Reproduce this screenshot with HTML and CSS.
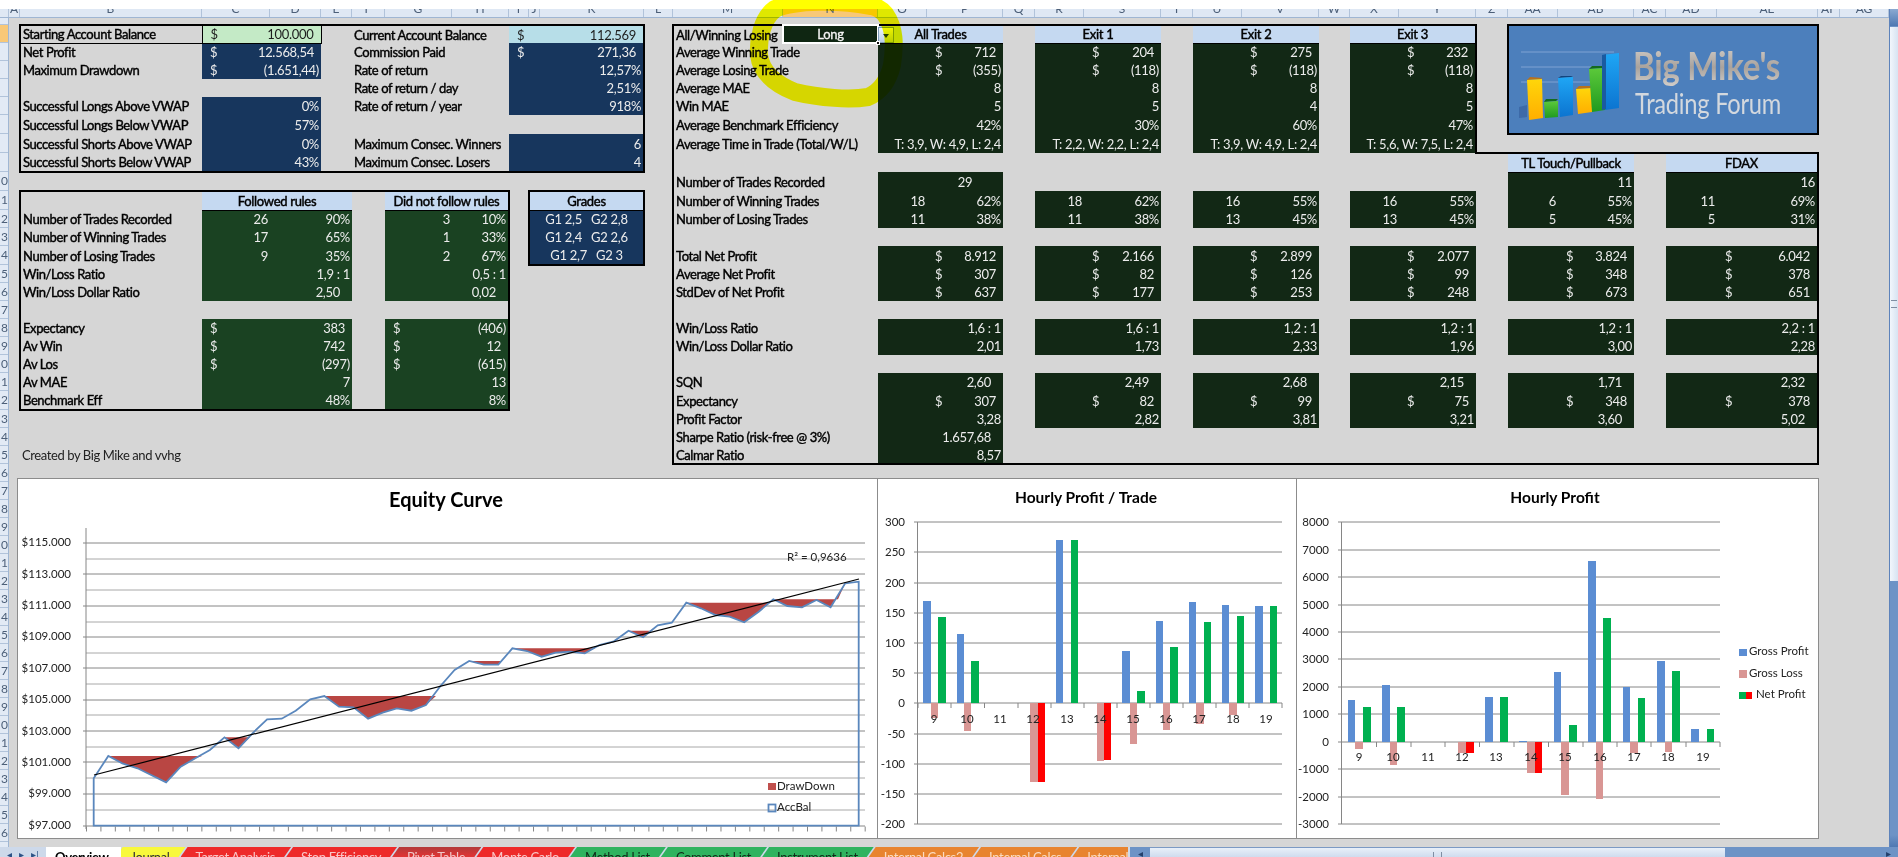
FILE: index.html
```html
<!DOCTYPE html>
<html lang="en">
<head>
  <meta charset="UTF-8">
  <title>Trade Journal - Overview</title>
  <link rel="stylesheet" href="styles.css">
</head>
<body>

<div class="app">
  <div class="topband"></div>

  <div class="main">
    <div class="sheet">
      <!-- column letters -->
      <div class="colhead">
        <span class="ch"></span><span class="ca">A</span><span class="cb">B</span><span class="cc">C</span><span class="cd">D</span><span class="ce">E</span><span class="cf">F</span><span class="cg">G</span><span class="chh">H</span><span class="ci">I</span><span class="cj">J</span><span class="ck">K</span><span class="cl">L</span><span class="cm">M</span><span class="cn on">N</span><span class="co">O</span><span class="cp">P</span><span class="cq">Q</span><span class="cr">R</span><span class="cs">S</span><span class="ct">T</span><span class="cu">U</span><span class="cv">V</span><span class="cw">W</span><span class="cx">X</span><span class="cy">Y</span><span class="cz">Z</span><span class="caa">AA</span><span class="cab">AB</span><span class="cac">AC</span><span class="cad">AD</span><span class="cae">AE</span><span class="caf">AF</span><span class="cag">AG</span>
      </div>

      <div class="sheetbody">
        <!-- row numbers, only the last digit shows in the narrow gutter -->
        <div class="rowhead">
          <span class="r8"></span><span class="on"></span><span></span><span></span><span></span><span></span><span class="r19"></span><span class="r19"></span><span class="r19"></span><span class="r19">0</span><span class="r19">1</span><span>2</span><span>3</span><span class="r19">4</span><span>5</span><span>6</span><span>7</span><span>8</span><span>9</span><span>0</span><span>1</span><span class="r19">2</span><span>3</span><span>4</span><span>5</span><span>6</span><span>7</span><span>8</span><span>9</span><span>0</span><span>1</span><span>2</span><span>3</span><span>4</span><span>5</span><span>6</span><span>7</span><span>8</span><span>9</span><span>0</span><span>1</span><span>2</span><span>3</span><span>4</span><span>5</span><span>6</span><span>7</span>
        </div>

        <div class="cells">
          <table class="grid">
            <colgroup>
              <col class="ca"><col class="cb"><col class="cc"><col class="cd"><col class="ce"><col class="cf"><col class="cg"><col class="chh"><col class="ci"><col class="cj"><col class="ck"><col class="cl"><col class="cm"><col class="cn"><col class="co"><col class="cp"><col class="cq"><col class="cr"><col class="cs"><col class="ct"><col class="cu"><col class="cv"><col class="cw"><col class="cx"><col class="cy"><col class="cz"><col class="caa"><col class="cab"><col class="cac"><col class="cad"><col class="cae"><col class="caf"><col class="cag">
            </colgroup>

            <tr class="r8"><td colspan="33"></td></tr>

            <!-- row 2 -->
            <tr>
              <td></td><td class="lb bl bt line">Starting Account Balance</td><td class="mint bt box" colspan="2"><span class="cur">$</span>100.000</td><td class="bt"></td><td class="lb bt" colspan="3">Current Account Balance</td><td class="sky bt br p7" colspan="3"><span class="cur">$</span>112.569</td><td></td>
              <td class="lb bl bt">All/Winning Losing</td><td class="sel c">Long<span class="drop"></span><span class="handle"></span></td><td class="hd bt c" colspan="2">All Trades</td><td class="bt"></td><td class="hd bt c" colspan="2">Exit 1</td><td class="bt"></td><td class="hd bt c" colspan="2">Exit 2</td><td class="bt"></td><td class="hd bt br c" colspan="2">Exit 3</td><td></td>
              <td class="logo" colspan="5" rowspan="6">
                <svg class="logosvg" viewBox="1510 27 306 106" width="306" height="106">
                  <defs>
                    <linearGradient id="metal" x1="0" y1="0" x2="0" y2="1"><stop offset="0" stop-color="#d8d4d0"/><stop offset=".55" stop-color="#a9a29c"/><stop offset="1" stop-color="#d6d2ce"/></linearGradient>
                    <linearGradient id="yel" x1="0" y1="0" x2="0" y2="1"><stop offset="0" stop-color="#ffd60a"/><stop offset="1" stop-color="#ffae00"/></linearGradient>
                    <linearGradient id="grn" x1="0" y1="0" x2="0" y2="1"><stop offset="0" stop-color="#5cc93a"/><stop offset="1" stop-color="#1f9a1f"/></linearGradient>
                    <linearGradient id="blu" x1="0" y1="0" x2="0" y2="1"><stop offset="0" stop-color="#1fa6f5"/><stop offset="1" stop-color="#0c74d0"/></linearGradient>
                  </defs>
                  <path d="M1522 52H1615M1522 67H1615M1522 82H1615" stroke="#7ea3d3" stroke-width="1" fill="none"/>
                  <polygon points="1520,107 1528,105 1528,117 1520,118" fill="#3d6aa8"/>
                  <polygon points="1528,80 1541,79 1544,78 1531,77" fill="#b9711a"/>
                  <polygon points="1528,80 1543,79 1544,118 1530,120" fill="url(#yel)"/>
                  <polygon points="1545,102 1557,101 1559,99 1547,99" fill="#136b1e"/>
                  <polygon points="1545,102 1559,101 1559,117 1546,118" fill="url(#grn)"/>
                  <polygon points="1559,78 1572,77 1574,76 1562,76" fill="#12457e"/>
                  <polygon points="1559,78 1574,77 1574,115 1561,117" fill="url(#blu)"/>
                  <polygon points="1577,89 1591,88 1593,86 1580,86" fill="#b9711a"/>
                  <polygon points="1577,89 1593,88 1593,112 1579,114" fill="url(#yel)"/>
                  <polygon points="1590,69 1604,68 1606,66 1593,66" fill="#136b1e"/>
                  <polygon points="1590,69 1606,68 1606,110 1593,112" fill="url(#grn)"/>
                  <polygon points="1603,55 1620,53 1620,108 1606,110" fill="url(#blu)"/>
                  <polygon points="1603,55 1607,54 1607,109 1603,110" fill="#1a5aa0"/>
                  <text class="logo1" x="1634" y="80" textLength="147" lengthAdjust="spacingAndGlyphs" fill="url(#metal)">Big Mike's</text>
                  <text class="logo2" x="1636" y="114" textLength="146" lengthAdjust="spacingAndGlyphs">Trading Forum</text>
                </svg>
              </td>
              <td colspan="2"></td>
            </tr>

            <!-- row 3 -->
            <tr>
              <td></td><td class="lb bl">Net Profit</td><td class="nv p7" colspan="2"><span class="cur">$</span>12.568,54</td><td></td><td class="lb" colspan="3">Commission Paid</td><td class="nv br p7" colspan="3"><span class="cur">$</span>271,36</td><td></td>
              <td class="lb bl" colspan="2">Average Winning Trade</td><td class="dk"></td><td class="dk p7"><span class="cur">$</span>712</td><td></td><td class="dk"></td><td class="dk p7"><span class="cur">$</span>204</td><td></td><td class="dk"></td><td class="dk p7"><span class="cur">$</span>275</td><td></td><td class="dk"></td><td class="dk br p7"><span class="cur">$</span>232</td><td></td><td colspan="2"></td>
            </tr>

            <!-- row 4 -->
            <tr>
              <td></td><td class="lb bl">Maximum Drawdown</td><td class="nv" colspan="2"><span class="cur">$</span>(1.651,44)</td><td></td><td class="lb" colspan="3">Rate of return</td><td class="nv br" colspan="3">12,57%</td><td></td>
              <td class="lb bl" colspan="2">Average Losing Trade</td><td class="dk"></td><td class="dk"><span class="cur">$</span>(355)</td><td></td><td class="dk"></td><td class="dk"><span class="cur">$</span>(118)</td><td></td><td class="dk"></td><td class="dk"><span class="cur">$</span>(118)</td><td></td><td class="dk"></td><td class="dk br"><span class="cur">$</span>(118)</td><td></td><td colspan="2"></td>
            </tr>

            <!-- row 5 -->
            <tr>
              <td></td><td class="lb bl"></td><td colspan="2"></td><td></td><td class="lb" colspan="3">Rate of return / day</td><td class="nv br" colspan="3">2,51%</td><td></td>
              <td class="lb bl" colspan="2">Average MAE</td><td class="dk"></td><td class="dk">8</td><td></td><td class="dk"></td><td class="dk">8</td><td></td><td class="dk"></td><td class="dk">8</td><td></td><td class="dk"></td><td class="dk br">8</td><td></td><td colspan="2"></td>
            </tr>

            <!-- row 6 -->
            <tr>
              <td></td><td class="lb bl">Successful Longs Above VWAP</td><td class="nv" colspan="2">0%</td><td></td><td class="lb" colspan="3">Rate of return / year</td><td class="nv br" colspan="3">918%</td><td></td>
              <td class="lb bl" colspan="2">Win MAE</td><td class="dk"></td><td class="dk">5</td><td></td><td class="dk"></td><td class="dk">5</td><td></td><td class="dk"></td><td class="dk">4</td><td></td><td class="dk"></td><td class="dk br">5</td><td></td><td colspan="2"></td>
            </tr>

            <!-- row 7 -->
            <tr class="r19">
              <td></td><td class="lb bl">Successful Longs Below VWAP</td><td class="nv" colspan="2">57%</td><td></td><td class="lb" colspan="3"></td><td class="br" colspan="3"></td><td></td>
              <td class="lb bl" colspan="2">Average Benchmark Efficiency</td><td class="dk"></td><td class="dk">42%</td><td></td><td class="dk"></td><td class="dk">30%</td><td></td><td class="dk"></td><td class="dk">60%</td><td></td><td class="dk"></td><td class="dk br">47%</td><td></td><td colspan="2"></td>
            </tr>

            <!-- row 8 -->
            <tr class="r19">
              <td></td><td class="lb bl">Successful Shorts Above VWAP</td><td class="nv" colspan="2">0%</td><td></td><td class="lb" colspan="3">Maximum Consec. Winners</td><td class="nv br" colspan="3">6</td><td></td>
              <td class="lb bl" colspan="2">Average Time in Trade (Total/W/L)</td><td class="dk" colspan="2">T: 3,9, W: 4,9, L: 2,4</td><td></td><td class="dk" colspan="2">T: 2,2, W: 2,2, L: 2,4</td><td></td><td class="dk" colspan="2">T: 3,9, W: 4,9, L: 2,4</td><td></td><td class="dk br" colspan="2">T: 5,6, W: 7,5, L: 2,4</td><td colspan="6"></td><td colspan="2"></td>
            </tr>

            <!-- row 9 -->
            <tr class="r19">
              <td></td><td class="lb bl bb">Successful Shorts Below VWAP</td><td class="nv bb" colspan="2">43%</td><td class="bb"></td><td class="lb bb" colspan="3">Maximum Consec. Losers</td><td class="nv br bb" colspan="3">4</td><td></td>
              <td class="bl" colspan="2"></td><td colspan="11"></td><td class="bt"></td><td class="hd bt c" colspan="2">TL Touch/Pullback</td><td class="bt"></td><td class="hd bt br c" colspan="2">FDAX</td><td colspan="2"></td>
            </tr>

            <!-- row 10 -->
            <tr class="r19">
              <td colspan="12"></td>
              <td class="lb bl" colspan="2">Number of Trades Recorded</td><td class="dk"></td><td class="dk c">29</td><td colspan="10"></td><td class="dk"></td><td class="dk">11</td><td></td><td class="dk"></td><td class="dk br">16</td><td colspan="2"></td>
            </tr>

            <!-- row 11 -->
            <tr class="r19">
              <td></td><td class="bl bt"></td><td class="hd bt c" colspan="3">Followed rules</td><td class="bt"></td><td class="hd bt br c" colspan="2">Did not follow rules</td><td></td><td class="hd bt bl br c" colspan="2">Grades</td><td></td>
              <td class="lb bl" colspan="2">Number of Winning Trades</td><td class="dk">18</td><td class="dk">62%</td><td></td><td class="dk">18</td><td class="dk">62%</td><td></td><td class="dk">16</td><td class="dk">55%</td><td></td><td class="dk">16</td><td class="dk">55%</td><td></td><td class="dk">6</td><td class="dk">55%</td><td></td><td class="dk">11</td><td class="dk br">69%</td><td colspan="2"></td>
            </tr>

            <!-- row 12 -->
            <tr>
              <td></td><td class="lb bl">Number of Trades Recorded</td><td class="gr">26</td><td class="gr" colspan="2">90%</td><td></td><td class="gr">3</td><td class="gr br">10%</td><td></td><td class="nv c bl br keep" colspan="2">G1 2,5   G2 2,8</td><td></td>
              <td class="lb bl" colspan="2">Number of Losing Trades</td><td class="dk">11</td><td class="dk">38%</td><td></td><td class="dk">11</td><td class="dk">38%</td><td></td><td class="dk">13</td><td class="dk">45%</td><td></td><td class="dk">13</td><td class="dk">45%</td><td></td><td class="dk">5</td><td class="dk">45%</td><td></td><td class="dk">5</td><td class="dk br">31%</td><td colspan="2"></td>
            </tr>

            <!-- row 13 -->
            <tr>
              <td></td><td class="lb bl">Number of Winning Trades</td><td class="gr">17</td><td class="gr" colspan="2">65%</td><td></td><td class="gr">1</td><td class="gr br">33%</td><td></td><td class="nv c bl br keep" colspan="2">G1 2,4   G2 2,6</td><td></td>
              <td class="bl" colspan="2"></td><td colspan="16"></td><td class="br"></td><td colspan="2"></td>
            </tr>

            <!-- row 14 -->
            <tr class="r19">
              <td></td><td class="lb bl">Number of Losing Trades</td><td class="gr">9</td><td class="gr" colspan="2">35%</td><td></td><td class="gr">2</td><td class="gr br">67%</td><td></td><td class="nv c bl br bb keep" colspan="2">G1 2,7   G2 3</td><td></td>
              <td class="lb bl" colspan="2">Total Net Profit</td><td class="dk"></td><td class="dk p7"><span class="cur">$</span>8.912</td><td></td><td class="dk"></td><td class="dk p7"><span class="cur">$</span>2.166</td><td></td><td class="dk"></td><td class="dk p7"><span class="cur">$</span>2.899</td><td></td><td class="dk"></td><td class="dk p7"><span class="cur">$</span>2.077</td><td></td><td class="dk"></td><td class="dk p7"><span class="cur">$</span>3.824</td><td></td><td class="dk"></td><td class="dk br p7"><span class="cur">$</span>6.042</td><td colspan="2"></td>
            </tr>

            <!-- row 15 -->
            <tr>
              <td></td><td class="lb bl">Win/Loss Ratio</td><td class="gr" colspan="3">1,9 : 1</td><td></td><td class="gr br" colspan="2">0,5 : 1</td><td colspan="4"></td>
              <td class="lb bl" colspan="2">Average Net Profit</td><td class="dk"></td><td class="dk p7"><span class="cur">$</span>307</td><td></td><td class="dk"></td><td class="dk p7"><span class="cur">$</span>82</td><td></td><td class="dk"></td><td class="dk p7"><span class="cur">$</span>126</td><td></td><td class="dk"></td><td class="dk p7"><span class="cur">$</span>99</td><td></td><td class="dk"></td><td class="dk p7"><span class="cur">$</span>348</td><td></td><td class="dk"></td><td class="dk br p7"><span class="cur">$</span>378</td><td colspan="2"></td>
            </tr>

            <!-- row 16 -->
            <tr>
              <td></td><td class="lb bl">Win/Loss Dollar Ratio</td><td class="gr p12" colspan="3">2,50</td><td></td><td class="gr br p12" colspan="2">0,02</td><td colspan="4"></td>
              <td class="lb bl" colspan="2">StdDev of Net Profit</td><td class="dk"></td><td class="dk p7"><span class="cur">$</span>637</td><td></td><td class="dk"></td><td class="dk p7"><span class="cur">$</span>177</td><td></td><td class="dk"></td><td class="dk p7"><span class="cur">$</span>253</td><td></td><td class="dk"></td><td class="dk p7"><span class="cur">$</span>248</td><td></td><td class="dk"></td><td class="dk p7"><span class="cur">$</span>673</td><td></td><td class="dk"></td><td class="dk br p7"><span class="cur">$</span>651</td><td colspan="2"></td>
            </tr>

            <!-- row 17 -->
            <tr>
              <td></td><td class="bl"></td><td colspan="4"></td><td class="br" colspan="2"></td><td colspan="4"></td>
              <td class="bl" colspan="2"></td><td colspan="16"></td><td class="br"></td><td colspan="2"></td>
            </tr>

            <!-- row 18 -->
            <tr>
              <td></td><td class="lb bl">Expectancy</td><td class="gr p7" colspan="3"><span class="cur">$</span>383</td><td></td><td class="gr br" colspan="2"><span class="cur">$</span>(406)</td><td colspan="4"></td>
              <td class="lb bl" colspan="2">Win/Loss Ratio</td><td class="dk" colspan="2">1,6 : 1</td><td></td><td class="dk" colspan="2">1,6 : 1</td><td></td><td class="dk" colspan="2">1,2 : 1</td><td></td><td class="dk" colspan="2">1,2 : 1</td><td></td><td class="dk" colspan="2">1,2 : 1</td><td></td><td class="dk br" colspan="2">2,2 : 1</td><td colspan="2"></td>
            </tr>

            <!-- row 19 -->
            <tr>
              <td></td><td class="lb bl">Av Win</td><td class="gr p7" colspan="3"><span class="cur">$</span>742</td><td></td><td class="gr br p7" colspan="2"><span class="cur">$</span>12</td><td colspan="4"></td>
              <td class="lb bl" colspan="2">Win/Loss Dollar Ratio</td><td class="dk" colspan="2">2,01</td><td></td><td class="dk" colspan="2">1,73</td><td></td><td class="dk" colspan="2">2,33</td><td></td><td class="dk" colspan="2">1,96</td><td></td><td class="dk" colspan="2">3,00</td><td></td><td class="dk br" colspan="2">2,28</td><td colspan="2"></td>
            </tr>

            <!-- row 20 -->
            <tr>
              <td></td><td class="lb bl">Av Los</td><td class="gr" colspan="3"><span class="cur">$</span>(297)</td><td></td><td class="gr br" colspan="2"><span class="cur">$</span>(615)</td><td colspan="4"></td>
              <td class="bl" colspan="2"></td><td colspan="16"></td><td class="br"></td><td colspan="2"></td>
            </tr>

            <!-- row 21 -->
            <tr>
              <td></td><td class="lb bl">Av MAE</td><td class="gr" colspan="3">7</td><td></td><td class="gr br" colspan="2">13</td><td colspan="4"></td>
              <td class="lb bl" colspan="2">SQN</td><td class="dk p12" colspan="2">2,60</td><td></td><td class="dk p12" colspan="2">2,49</td><td></td><td class="dk p12" colspan="2">2,68</td><td></td><td class="dk p12" colspan="2">2,15</td><td></td><td class="dk p12" colspan="2">1,71</td><td></td><td class="dk br p12" colspan="2">2,32</td><td colspan="2"></td>
            </tr>

            <!-- row 22 -->
            <tr class="r19">
              <td></td><td class="lb bl bb">Benchmark Eff</td><td class="gr bb" colspan="3">48%</td><td class="bb"></td><td class="gr br bb" colspan="2">8%</td><td colspan="4"></td>
              <td class="lb bl" colspan="2">Expectancy</td><td class="dk"></td><td class="dk p7"><span class="cur">$</span>307</td><td></td><td class="dk"></td><td class="dk p7"><span class="cur">$</span>82</td><td></td><td class="dk"></td><td class="dk p7"><span class="cur">$</span>99</td><td></td><td class="dk"></td><td class="dk p7"><span class="cur">$</span>75</td><td></td><td class="dk"></td><td class="dk p7"><span class="cur">$</span>348</td><td></td><td class="dk"></td><td class="dk br p7"><span class="cur">$</span>378</td><td colspan="2"></td>
            </tr>

            <!-- row 23 -->
            <tr>
              <td colspan="12"></td>
              <td class="lb bl" colspan="2">Profit Factor</td><td class="dk" colspan="2">3,28</td><td></td><td class="dk" colspan="2">2,82</td><td></td><td class="dk" colspan="2">3,81</td><td></td><td class="dk" colspan="2">3,21</td><td></td><td class="dk p12" colspan="2">3,60</td><td></td><td class="dk br p12" colspan="2">5,02</td><td colspan="2"></td>
            </tr>

            <!-- row 24 -->
            <tr>
              <td colspan="12"></td>
              <td class="lb bl" colspan="2">Sharpe Ratio (risk-free @ 3%)</td><td class="dk p12" colspan="2">1.657,68</td><td colspan="14"></td><td class="br"></td><td colspan="2"></td>
            </tr>

            <!-- row 25 -->
            <tr>
              <td></td><td class="lb thin" colspan="3">Created by Big Mike and vvhg</td><td colspan="8"></td>
              <td class="lb bl bb" colspan="2">Calmar Ratio</td><td class="dk bb" colspan="2">8,57</td><td class="bb" colspan="14"></td><td class="br bb"></td><td colspan="2"></td>
            </tr>
          </table>

          <!-- embedded charts, coordinates in the viewBox are sheet pixels -->
          <div class="charts">
            <div class="chart c1">
              <svg viewBox="18 479 859 359" width="859" height="359">
                <text class="title big" x="446" y="507" text-anchor="middle">Equity Curve</text>
                <path class="minor" d="M86 559H865M86 590H865M86 622H865M86 653H865M86 684H865M86 715H865M86 747H865M86 778H865M86 810H865"/>
                <path class="major" d="M83 543H865M83 574H865M83 606H865M83 637H865M83 668H865M83 700H865M83 731H865M83 762H865M83 794H865M83 826H865M86 528V829"/>
                <line class="ticks" x1="86" y1="829" x2="866" y2="829"/>
                <g class="ax" text-anchor="end">
                  <text x="71" y="546">$115.000</text><text x="71" y="578">$113.000</text><text x="71" y="609">$111.000</text><text x="71" y="640">$109.000</text><text x="71" y="672">$107.000</text><text x="71" y="703">$105.000</text><text x="71" y="735">$103.000</text><text x="71" y="766">$101.000</text><text x="71" y="797">$99.000</text><text x="71" y="829">$97.000</text>
                </g>
                <g class="dd">
                  <polygon points="108.3,756 122.3,763.3 137.5,768.3 166.1,782.3 180.7,766.7 195.3,758.3 202,756"/>
                  <polygon points="224.5,737.3 238.5,748.3 250,737.3"/>
                  <polygon points="324.4,696 339,706.7 353.5,707.3 368.1,718.7 382.7,712.7 396.8,708.3 411.4,710.7 426,705 436,696"/>
                  <polygon points="469.2,661 483.8,664.7 498.3,664.7 501,661"/>
                  <polygon points="512.4,648.3 527,651 541.6,656.7 555.6,652.7 570.2,651.7 584.8,653.3 595,648.3"/>
                  <polygon points="628.5,630.7 643.1,637.3 657,626 650,630.7"/>
                  <polygon points="686.3,602.7 700.9,608.3 715.5,615 729.6,616.7 744.2,622.3 758.7,611.7 769,602.7"/>
                  <polygon points="773.3,599.3 787.4,606 802,607.3 816.5,600 830.6,607.3 845.2,583.3 838,599.3"/>
                </g>
                <polygon class="acc" points="93.7,825.7 93.7,778.3 108.3,756 122.3,763.3 137.5,768.3 166.1,782.3 180.7,766.7 195.3,758.3 209.9,750 224.5,737.3 238.5,748.3 252.5,733.3 267.1,719.3 281.7,718.7 295.7,710.7 310.3,699.3 324.4,696 339,706.7 353.5,707.3 368.1,718.7 382.7,712.7 396.8,708.3 411.4,710.7 426,705 440.5,686 454.6,670 469.2,661 483.8,664.7 498.3,664.7 512.4,648.3 527,651 541.6,656.7 555.6,652.7 570.2,651.7 584.8,653.3 599.4,645 613.9,641.3 628.5,630.7 643.1,637.3 657.7,625.3 671.8,622.7 686.3,602.7 700.9,608.3 715.5,615 729.6,616.7 744.2,622.3 758.7,611.7 773.3,599.3 787.4,606 802,607.3 816.5,600 830.6,607.3 845.2,583.3 858.7,581.7 858.7,825.7"/>
                <line class="trend" x1="94" y1="775" x2="859" y2="579"/>
                <text class="ax" x="787" y="561">R² = 0,9636</text>
                <rect x="768" y="783" width="8" height="7" fill="#c0504d"/>
                <text class="ax" x="777" y="790">DrawDown</text>
                <rect class="acc" x="768.5" y="804.5" width="7" height="7"/>
                <text class="ax" x="777" y="811">AccBal</text>
              </svg>
            </div>

            <div class="chart c2">
              <svg viewBox="879 479 418 359" width="418" height="359">
                <text class="title" x="1087" y="503" text-anchor="middle">Hourly Profit / Trade</text>
                <path class="major" d="M915 522H1283M915 552H1283M915 583H1283M915 613H1283M915 643H1283M915 673H1283M915 703H1283M915 734H1283M915 764H1283M915 794H1283M915 824H1283M918.5 522V824"/>
                <path class="major" d="M919 703V708M952 703V708M985.500 703V708M1019 703V708M1052 703V708M1085 703V708M1118 703V708M1151 703V708M1184 703V708M1217 703V708M1250 703V708M1283 703V708"/>
                <g class="ax" text-anchor="end">
                  <text x="906" y="526">300</text><text x="906" y="556">250</text><text x="906" y="587">200</text><text x="906" y="617">150</text><text x="906" y="647">100</text><text x="906" y="677">50</text><text x="906" y="707">0</text><text x="906" y="738">-50</text><text x="906" y="768">-100</text><text x="906" y="798">-150</text><text x="906" y="828">-200</text>
                </g>
                <g class="blue">
                  <rect x="924" y="601" width="8" height="102"/><rect x="958" y="634" width="7" height="69"/><rect x="1057" y="540" width="7" height="163"/><rect x="1123" y="651" width="8" height="52"/><rect x="1157" y="621" width="7" height="82"/><rect x="1190" y="602" width="7" height="101"/><rect x="1223" y="605" width="7" height="98"/><rect x="1256" y="606" width="8" height="97"/>
                </g>
                <g class="pink">
                  <rect x="932" y="703" width="7" height="15"/><rect x="965" y="703" width="7" height="28"/><rect x="1031" y="703" width="8" height="79"/><rect x="1098" y="703" width="7" height="58"/><rect x="1131" y="703" width="7" height="41"/><rect x="1164" y="703" width="7" height="27"/><rect x="1197" y="703" width="8" height="21"/><rect x="1230" y="703" width="8" height="12"/>
                </g>
                <g class="green">
                  <rect x="939" y="617" width="8" height="86"/><rect x="972" y="661" width="8" height="42"/><rect x="1072" y="540" width="7" height="163"/><rect x="1138" y="691" width="8" height="12"/><rect x="1171" y="647" width="8" height="56"/><rect x="1205" y="622" width="7" height="81"/><rect x="1238" y="616" width="7" height="87"/><rect x="1271" y="606" width="7" height="97"/>
                </g>
                <g class="red">
                  <rect x="1039" y="703" width="7" height="79"/><rect x="1105" y="703" width="7" height="57"/>
                </g>
                <g class="ax" text-anchor="middle">
                  <text x="935" y="723">9</text><text x="968" y="723">10</text><text x="1001" y="723">11</text><text x="1034" y="723">12</text><text x="1068" y="723">13</text><text x="1101" y="723">14</text><text x="1134" y="723">15</text><text x="1167" y="723">16</text><text x="1200" y="723">17</text><text x="1234" y="723">18</text><text x="1267" y="723">19</text>
                </g>
              </svg>
            </div>

            <div class="chart c3">
              <svg viewBox="1299 479 520 359" width="520" height="359">
                <text class="title" x="1557" y="503" text-anchor="middle">Hourly Profit</text>
                <path class="major" d="M1340 522H1722M1340 550H1722M1340 577H1722M1340 605H1722M1340 632H1722M1340 659H1722M1340 687H1722M1340 714H1722M1340 742H1722M1340 769H1722M1340 797H1722M1340 824H1722M1343.500 522V824"/>
                <path class="major" d="M1378.500 742V747M1413 742V747M1447 742V747M1481.500 742V747M1516 742V747M1550.500 742V747M1585 742V747M1619 742V747M1653 742V747M1688 742V747M1722 742V747"/>
                <g class="ax" text-anchor="end">
                  <text x="1331" y="526">8000</text><text x="1331" y="554">7000</text><text x="1331" y="581">6000</text><text x="1331" y="609">5000</text><text x="1331" y="636">4000</text><text x="1331" y="663">3000</text><text x="1331" y="691">2000</text><text x="1331" y="718">1000</text><text x="1331" y="746">0</text><text x="1331" y="773">-1000</text><text x="1331" y="801">-2000</text><text x="1331" y="828">-3000</text>
                </g>
                <g class="blue">
                  <rect x="1350" y="700" width="7" height="42"/><rect x="1384" y="685" width="8" height="57"/><rect x="1487" y="697" width="8" height="45"/><rect x="1521" y="741" width="8" height="1"/><rect x="1556" y="672" width="7" height="70"/><rect x="1590" y="561" width="8" height="181"/><rect x="1625" y="687" width="7" height="55"/><rect x="1659" y="661" width="8" height="81"/><rect x="1693" y="729" width="8" height="13"/>
                </g>
                <g class="pink">
                  <rect x="1357" y="742" width="8" height="7"/><rect x="1392" y="742" width="7" height="23"/><rect x="1460" y="742" width="8" height="11"/><rect x="1529" y="742" width="8" height="31"/><rect x="1563" y="742" width="8" height="53"/><rect x="1598" y="742" width="7" height="57"/><rect x="1632" y="742" width="8" height="11"/><rect x="1667" y="742" width="7" height="10"/>
                </g>
                <g class="green">
                  <rect x="1365" y="707" width="8" height="35"/><rect x="1399" y="707" width="8" height="35"/><rect x="1502" y="697" width="8" height="45"/><rect x="1571" y="725" width="8" height="17"/><rect x="1605" y="618" width="8" height="124"/><rect x="1640" y="698" width="7" height="44"/><rect x="1674" y="671" width="8" height="71"/><rect x="1709" y="729" width="7" height="13"/>
                </g>
                <g class="red">
                  <rect x="1468" y="742" width="8" height="11"/><rect x="1537" y="742" width="7" height="31"/>
                </g>
                <g class="ax" text-anchor="middle">
                  <text x="1361" y="761">9</text><text x="1395" y="761">10</text><text x="1430" y="761">11</text><text x="1464" y="761">12</text><text x="1498" y="761">13</text><text x="1533" y="761">14</text><text x="1567" y="761">15</text><text x="1602" y="761">16</text><text x="1636" y="761">17</text><text x="1670" y="761">18</text><text x="1705" y="761">19</text>
                </g>
                <rect class="blue" x="1741" y="649" width="8" height="7"/>
                <text class="ax" x="1751" y="655">Gross Profit</text>
                <rect class="pink" x="1741" y="670" width="8" height="8"/>
                <text class="ax" x="1751" y="677">Gross Loss</text>
                <rect class="green" x="1741" y="692" width="7" height="7"/><rect class="red" x="1748" y="692" width="6" height="7"/>
                <text class="ax" x="1758" y="698">Net Profit</text>
              </svg>
            </div>
          </div>
        </div>
      </div>
    </div>

    <!-- vertical scrollbar -->
    <div class="vscroll">
      <div class="vup"></div>
      <div class="vthumb"><span class="grip"></span></div>
      <div class="vtrack"></div>
      <div class="vdown"></div>
    </div>
  </div>

  <!-- sheet tabs and horizontal scrollbar -->
  <div class="tabbar">
    <div class="tabnav"><span>◂</span><span>▸</span><span>▸|</span></div>
    <div class="tabs">
      <span class="tab t-active">Overview</span>
      <span class="tab t-yellow">Journal</span>
      <span class="tab t-red">Target Analysis</span>
      <span class="tab t-red">Stop Efficiency</span>
      <span class="tab t-dred">Pivot Table</span>
      <span class="tab t-red">Monte Carlo</span>
      <span class="tab t-green">Method List</span>
      <span class="tab t-green">Comment List</span>
      <span class="tab t-green">Instrument List</span>
      <span class="tab t-orange">Internal Calcs2</span>
      <span class="tab t-orange">Internal Calcs</span>
      <span class="tab t-orange">Internal Calcs3</span>
    </div>
    <div class="hscroll">
      <div class="harrow">◂</div>
      <div class="hthumb"><span class="hgrip"></span></div>
      <div class="htrack"></div>
      <div class="harrow">▸</div>
    </div>
  </div>

  <!-- yellow marker scribble someone drew over the screenshot -->
  <svg class="scribble" viewBox="740 0 170 115" width="170" height="115">
    <path d="M870 6C840 0 795 0 775 9C762 18 758 40 759 55C761 72 775 84 795 92C820 98 850 100 868 97C880 92 888 82 892 65C895 45 895 28 885 14C880 8 875 6 868 5"/>
  </svg>
</div>

</body>
</html>
```

FILE: styles.css
```css
body{
  margin: 0;
  font-family: Lato, "Open Sans", sans-serif;
}

.app{
  position: relative;
  width: 1898px;
  height: 857px;
  overflow: hidden;
  display: flex;
  flex-direction: column;
  background: #d6d6d6;
}

.topband{
  height: 9px;
  background: #fff;
  flex: none;
}

.main{
  display: flex;
  height: 838px;
  flex: none;
}

.sheet{
  width: 1889px;
  flex: none;
}

/* column widths, shared by the letter strip and the table */
.ch{width: 9px}
.ca{width: 11px}
.cb{width: 182px}
.cc{width: 68px}
.cd{width: 51px}
.ce{width: 31px}
.cf{width: 33px}
.cg{width: 67px}
.chh{width: 57px}
.ci{width: 20px}
.cj{width: 11px}
.ck{width: 104px}
.cl{width: 29px}
.cm{width: 110px}
.cn{width: 95px}
.co{width: 49px}
.cp{width: 76px}
.cq{width: 32px}
.cr{width: 49px}
.cs{width: 77px}
.ct{width: 32px}
.cu{width: 49px}
.cv{width: 77px}
.cw{width: 31px}
.cx{width: 49px}
.cy{width: 77px}
.cz{width: 32px}
.caa{width: 50px}
.cab{width: 76px}
.cac{width: 32px}
.cad{width: 51px}
.cae{width: 101px}
.caf{width: 22px}
.cag{width: 49px}

.colhead{
  display: flex;
  height: 9px;
  overflow: hidden;
  background: #dfe8f4;
  border-bottom: 1px solid #9fb6d3;
  box-sizing: border-box;
}
.colhead span{
  flex: none;
  box-sizing: border-box;
  margin-top: -9px;
  height: 18px;
  line-height: 18px;
  font-size: 12px;
  color: #4c5f78;
  text-align: center;
  border-right: 1px solid #b1c3da;
}
.colhead .on{
  background: #f8c877;
}

.sheetbody{
  display: flex;
}

.rowhead{
  width: 9px;
  flex: none;
  display: flex;
  flex-direction: column;
  background: #e2eaf5;
  border-right: 1px solid #9fb6d3;
  box-sizing: border-box;
  height: 829px;
  overflow: hidden;
}
.rowhead span{
  flex: none;
  height: 18px;
  line-height: 17px;
  font-size: 12px;
  color: #4c5f78;
  text-align: left;
  padding-left: 1px;
  box-sizing: border-box;
  border-bottom: 1px solid #b1c3da;
}
.rowhead .r8{height: 7px}
.rowhead .r19{height: 19px}
.rowhead .on{background: #f8c877}

.cells{
  width: 1880px;
}

/* the sheet itself */
.grid{
  width: 1880px;
  table-layout: fixed;
  border-collapse: collapse;
  font-size: 13px;
  letter-spacing: -.3px;
  color: #ececec;
}
.grid tr{height: 18px}
.grid tr.r8{height: 7px}
.grid tr.r19{height: 19px}
.grid td{
  padding: 0 2px 0 0;
  line-height: 16px;
  text-align: right;
  white-space: nowrap;
  overflow: hidden;
}

.grid .lb{
  color: #000;
  text-align: left;
  padding: 0 0 0 2px;
  overflow: visible;
  letter-spacing: -.4px;
  -webkit-text-stroke: .4px #000;
}
.grid .thin{
  -webkit-text-stroke: 0;
  color: #222;
}
.grid .c{
  text-align: center;
  padding: 0;
}
.grid .p7{padding-right: 7px}
.grid .p12{padding-right: 12px}
.grid .keep{white-space: pre}

.cur{
  float: left;
  padding-left: 8px;
}

.nv{background: #17365d}
.gr{background: #1a4222}
.dk{background: #122815}
.grid .mint{background: #c4eac6; color: #1d1d1d; padding-right: 7px}
.grid .sky{background: #b7dee8; color: #1d1d1d}
.grid .hd{
  background: #c5d9f1;
  color: #000;
  border-bottom: 1px solid #000;
  -webkit-text-stroke: .45px #000;
}
.grid .box{border: 1px solid #000; border-top: 2px solid #000}
.grid .line{border-bottom: 1px solid #000}

.bt{border-top: 2px solid #000}
.bb{border-bottom: 2px solid #000}
.bl{border-left: 2px solid #000}
.br{border-right: 2px solid #000}

/* selected cell with its validation dropdown */
.grid .sel{
  position: relative;
  background: #0f2612;
  color: #f4f4f4;
  outline: 2px solid #fff;
  outline-offset: -1px;
  overflow: visible;
  z-index: 2;
  -webkit-text-stroke: .3px #f4f4f4;
}
.drop{
  position: absolute;
  right: -16px;
  top: 2px;
  width: 16px;
  height: 16px;
  background: linear-gradient(#eef3fa, #bcd0ea);
  border: 1px solid #7f9db9;
  box-sizing: border-box;
}
.drop::after{
  content: "";
  position: absolute;
  left: 4px;
  top: 6px;
  border-left: 3px solid transparent;
  border-right: 3px solid transparent;
  border-top: 4px solid #223a5e;
}
.handle{
  position: absolute;
  right: -2px;
  bottom: -2px;
  width: 4px;
  height: 4px;
  background: #111;
  border: 1px solid #fff;
  box-sizing: border-box;
}

/* logo */
.grid .logo{
  background: #4c7fbc;
  border: 2px solid #000;
  padding: 0;
  overflow: hidden;
  vertical-align: middle;
}
.logosvg{display: block}
.logo1{font: 700 39px Lato, sans-serif}
.logo2{font: 400 28px Lato, sans-serif; fill: #d3d8de}

/* charts */
.charts{
  display: flex;
  margin: 13px 0 0 8px;
}
.chart{
  background: #fff;
  border: 1px solid #8c8c8c;
  height: 361px;
  box-sizing: border-box;
}
.chart + .chart{border-left: 0}
.chart svg{display: block}
.c1{width: 861px}
.c2{width: 419px}
.c3{width: 522px}
.title{font: 700 15.500px Lato, sans-serif; fill: #000}
.title.big{font-size: 20px}
.ax{font: 400 11.500px Lato, sans-serif; fill: #222}
.major{stroke: #868686; stroke-width: 1; fill: none}
.minor{stroke: #a8a8a8; stroke-width: 1; fill: none}
.ticks{stroke: #868686; stroke-width: 5; stroke-dasharray: 1 13.420}
.dd{fill: #b94643}
.chart .acc{fill: none; stroke: #5a87bd; stroke-width: 1.800}
.trend{stroke: #000; stroke-width: 1.200}
.blue{fill: #5b8dd3}
.pink{fill: #d99694}
.green{fill: #00b050}
.red{fill: #f00}

/* scrollbars */
.vscroll{
  width: 9px;
  flex: none;
  display: flex;
  flex-direction: column;
  background: #6d93c6;
  border-left: 1px solid #5d83bb;
  box-sizing: border-box;
}
.vup{height: 17px; background: linear-gradient(#8caad2, #4e78b2)}
.vthumb{
  height: 554px;
  background: linear-gradient(90deg, #f2f6fc, #d7e3f2);
  display: flex;
  align-items: center;
  justify-content: center;
  margin-top: 1px;
}
.grip{
  width: 6px;
  height: 6px;
  border-top: 1px solid #7f8ea3;
  border-bottom: 1px solid #7f8ea3;
}
.vtrack{flex: 1; background: #6d93c6}
.vdown{height: 12px; background: linear-gradient(#6d93c6, #4e78b2)}

.tabbar{
  position: relative;
  display: flex;
  height: 10px;
  flex: none;
  overflow: hidden;
  background: #cdd9ea;
  font-size: 13px;
  line-height: 16px;
}
.tabnav{
  width: 46px;
  flex: none;
  display: flex;
  justify-content: space-evenly;
  font-size: 10px;
  color: #2d5286;
  line-height: 14px;
}
.tabs{
  width: 1082px;
  flex: none;
  display: flex;
  overflow: hidden;
  letter-spacing: -.35px;
}
.tab{
  flex: none;
  padding: 2px 16px 0 15px;
  margin-left: -5px;
  clip-path: polygon(7px 0, 100% 0, calc(100% - 7px) 100%, 0 100%);
  white-space: nowrap;
}
.tab:first-child{margin-left: 0}
.t-active{background: #fff; color: #000; font-weight: 700; clip-path: none; padding-left: 9px; padding-right: 12px; z-index: 1}
.t-yellow{background: #f8f83c; color: #333}
.t-red{background: #ee2a2a; color: #f8c6c6}
.t-dred{background: linear-gradient(#b33a3a, #e23434); color: #f0c8c8}
.t-green{background: #2fb35f; color: #0f2a18}
.t-orange{background: #e8842f; color: #fbdcc0}

.hscroll{
  flex: 1;
  display: flex;
  margin-left: 2px;
  background: #6d93c6;
}
.harrow{
  width: 20px;
  flex: none;
  background: #6d93c6;
  color: #24406c;
  font-size: 10px;
  line-height: 12px;
  text-align: center;
}
.hthumb{
  width: 575px;
  flex: none;
  background: linear-gradient(#e9f0f9, #cfdcee);
  border-top: 1px solid #7c9ac4;
  box-sizing: border-box;
  display: flex;
  justify-content: center;
}
.hgrip{
  width: 7px;
  height: 100%;
  margin-top: 4px;
  border-left: 1px solid #7f8ea3;
  border-right: 1px solid #7f8ea3;
}
.htrack{flex: 1}

.scribble{
  position: absolute;
  left: 740px;
  top: 0;
  mix-blend-mode: multiply;
  pointer-events: none;
  z-index: 5;
}
.scribble path{
  fill: none;
  stroke: #ffff00;
  stroke-width: 18;
  stroke-linecap: round;
}
```
